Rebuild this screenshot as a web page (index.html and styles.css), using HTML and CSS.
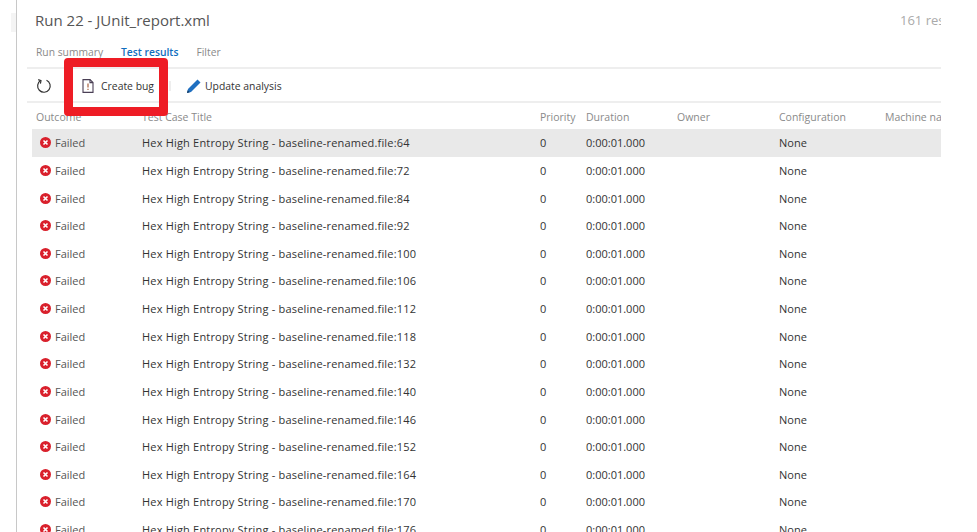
FILE: index.html
```html
<!DOCTYPE html>
<html lang="en">
<head>
    <meta charset="UTF-8">
    <meta name="viewport" content="width=device-width, initial-scale=1.0">
    <title>Run 22 - JUnit_report.xml</title>
    <link rel="stylesheet" href="styles.css">
</head>
<body>
    <div class="page">
        <div class="side-tab"></div>
        <div class="container">
            <div class="title-bar">
                <h1>Run 22 - JUnit_report.xml</h1>
                <span class="result-count">161 results</span>
            </div>
            <div class="tabs">
                <span class="tab">Run summary</span>
                <span class="tab active">Test results</span>
                <span class="tab">Filter</span>
            </div>
            <div class="toolbar">
                <svg class="refresh-icon" width="16" height="16" viewBox="0 0 16 16" fill="none" stroke="#333" stroke-width="1.2">
                    <path d="M4.6 2.6A6.3 6.3 0 1 0 10.5 2.2"/>
                    <path d="M2.2 1.6L5 2.6L4.4 5.6"/>
                </svg>
                <span class="tool tool-bug">
                    <svg width="12" height="14" viewBox="0 0 12 14" fill="none" stroke="#4a3f55" stroke-width="1.1">
                        <path d="M1 .6H8L11 3.6V13.4H1Z"/>
                        <path d="M8 .6V3.6H11"/>
                        <path d="M6 4.5V8.6M6 9.8V11" stroke="#a0522d"/>
                    </svg>
                    Create bug
                </span>
                <span class="tool-sep"></span>
                <span class="tool tool-update">
                    <svg width="16" height="16" viewBox="0 0 16 16">
                        <path d="M1 15L2 11L11.5 1.5L14.5 4.5L5 14Z" fill="#1f6fc0"/>
                        <path d="M1 15L1.7 12.3L3.7 14.3Z" fill="#12395f"/>
                    </svg>
                    Update analysis
                </span>
                <div class="callout"></div>
            </div>
            <div class="grid-head">
                <span>Outcome</span>
                <span>Test Case Title</span>
                <span>Priority</span>
                <span>Duration</span>
                <span>Owner</span>
                <span>Configuration</span>
                <span>Machine name</span>
            </div>
            <div class="grid-rows" id="rows"></div>
        </div>
    </div>

    <template id="rowTemplate">
        <div class="row">
            <span class="outcome">
                <svg width="11" height="11" viewBox="0 0 11 11">
                    <circle cx="5.5" cy="5.5" r="5.5" fill="#d9202c"/>
                    <path d="M3.5 3.5L7.5 7.5M7.5 3.5L3.5 7.5" stroke="#fff" stroke-width="1.6"/>
                </svg>
                Failed
            </span>
            <span class="case-title"></span>
            <span>0</span>
            <span>0:00:01.000</span>
            <span></span>
            <span class="config">None</span>
            <span></span>
        </div>
    </template>

    <script>
        // line numbers of the failed cases, in table order
        let lines = [64, 72, 84, 92, 100, 106, 112, 118, 132, 140, 146, 152, 164, 170, 176];
        let rows = document.getElementById("rows");
        let template = document.getElementById("rowTemplate");
        lines.forEach(function(line, i) {
            let row = template.content.cloneNode(true);
            row.querySelector(".case-title").innerText = "Hex High Entropy String - baseline-renamed.file:" + line;
            if (i === 0) {
                row.querySelector(".row").classList.add("selected");
            }
            rows.appendChild(row);
        });
    </script>
</body>
</html>
```

FILE: styles.css
```css
html, body {
    height: 100%;
}
body {
    font-family: "Open Sans", "Liberation Sans", sans-serif;
    font-size: 11px;
    margin: 0;
    padding: 0;
    background-color: #fff;
    color: #333;
    overflow: hidden;
}
.page {
    display: flex;
    height: 532px;
    width: 941px;
    overflow: hidden;
}
.side-tab {
    width: 5px;
    height: 19px;
    margin: 13px 0 0 11px;
    background-color: #f4f4f4;
    flex: none;
}
.container {
    flex: 1;
    min-width: 0;
    border-left: 1px solid #c8c8c8;
    padding-left: 10px;
}
.title-bar {
    display: flex;
    justify-content: space-between;
    height: 40px;
    align-items: center;
    padding-left: 8px;
    white-space: nowrap;
}
h1 {
    margin: 0;
    font-size: 15px;
    font-weight: 400;
    color: #555;
}
.result-count {
    font-size: 13px;
    color: #aaa;
    width: 41px;
    overflow: hidden;
}
.tabs {
    display: flex;
    gap: 18px;
    height: 23px;
    padding-bottom: 4px;
    align-items: center;
    padding-left: 9px;
    font-size: 10.3px;
    color: #8a8a8a;
    border-bottom: 2px solid #eee;
}
.tab.active {
    color: #106ebe;
    font-weight: 600;
}
.toolbar {
    position: relative;
    display: flex;
    align-items: center;
    height: 31px;
    padding-top: 1px;
    padding-left: 9px;
    border-bottom: 2px solid #eee;
    font-size: 10.4px;
}
.refresh-icon {
    margin-right: 30px;
}
.tool {
    display: flex;
    align-items: center;
    gap: 7px;
    color: #333;
}
.tool-update {
    gap: 3px;
}
.tool-sep {
    width: 2px;
    height: 10px;
    margin: 0 15px 0 15px;
    background-color: #eee;
}
.callout {
    position: absolute;
    left: 37px;
    top: -11px;
    width: 86px;
    height: 40px;
    border: 9px solid #ee1c25;
    border-radius: 4px;
}
.grid-head, .row {
    display: grid;
    grid-template-columns: 110px 398px 46px 91px 102px 106px 1fr;
    white-space: nowrap;
    margin-left: 5px;
    align-items: center;
}
.grid-head {
    height: 26px;
    padding-top: 1px;
    box-sizing: border-box;
    color: #8a8a8a;
    font-size: 10.5px;
}
.grid-head span:first-child {
    padding-left: 4px;
}
.row {
    height: 27.64px;
}
.row.selected {
    background-color: #e9e9e9;
}
.outcome {
    display: flex;
    align-items: center;
    gap: 4px;
    padding-left: 8px;
    color: #555;
}
.case-title {
    letter-spacing: 0.19px;
}
.config {
    color: #333;
}
```
